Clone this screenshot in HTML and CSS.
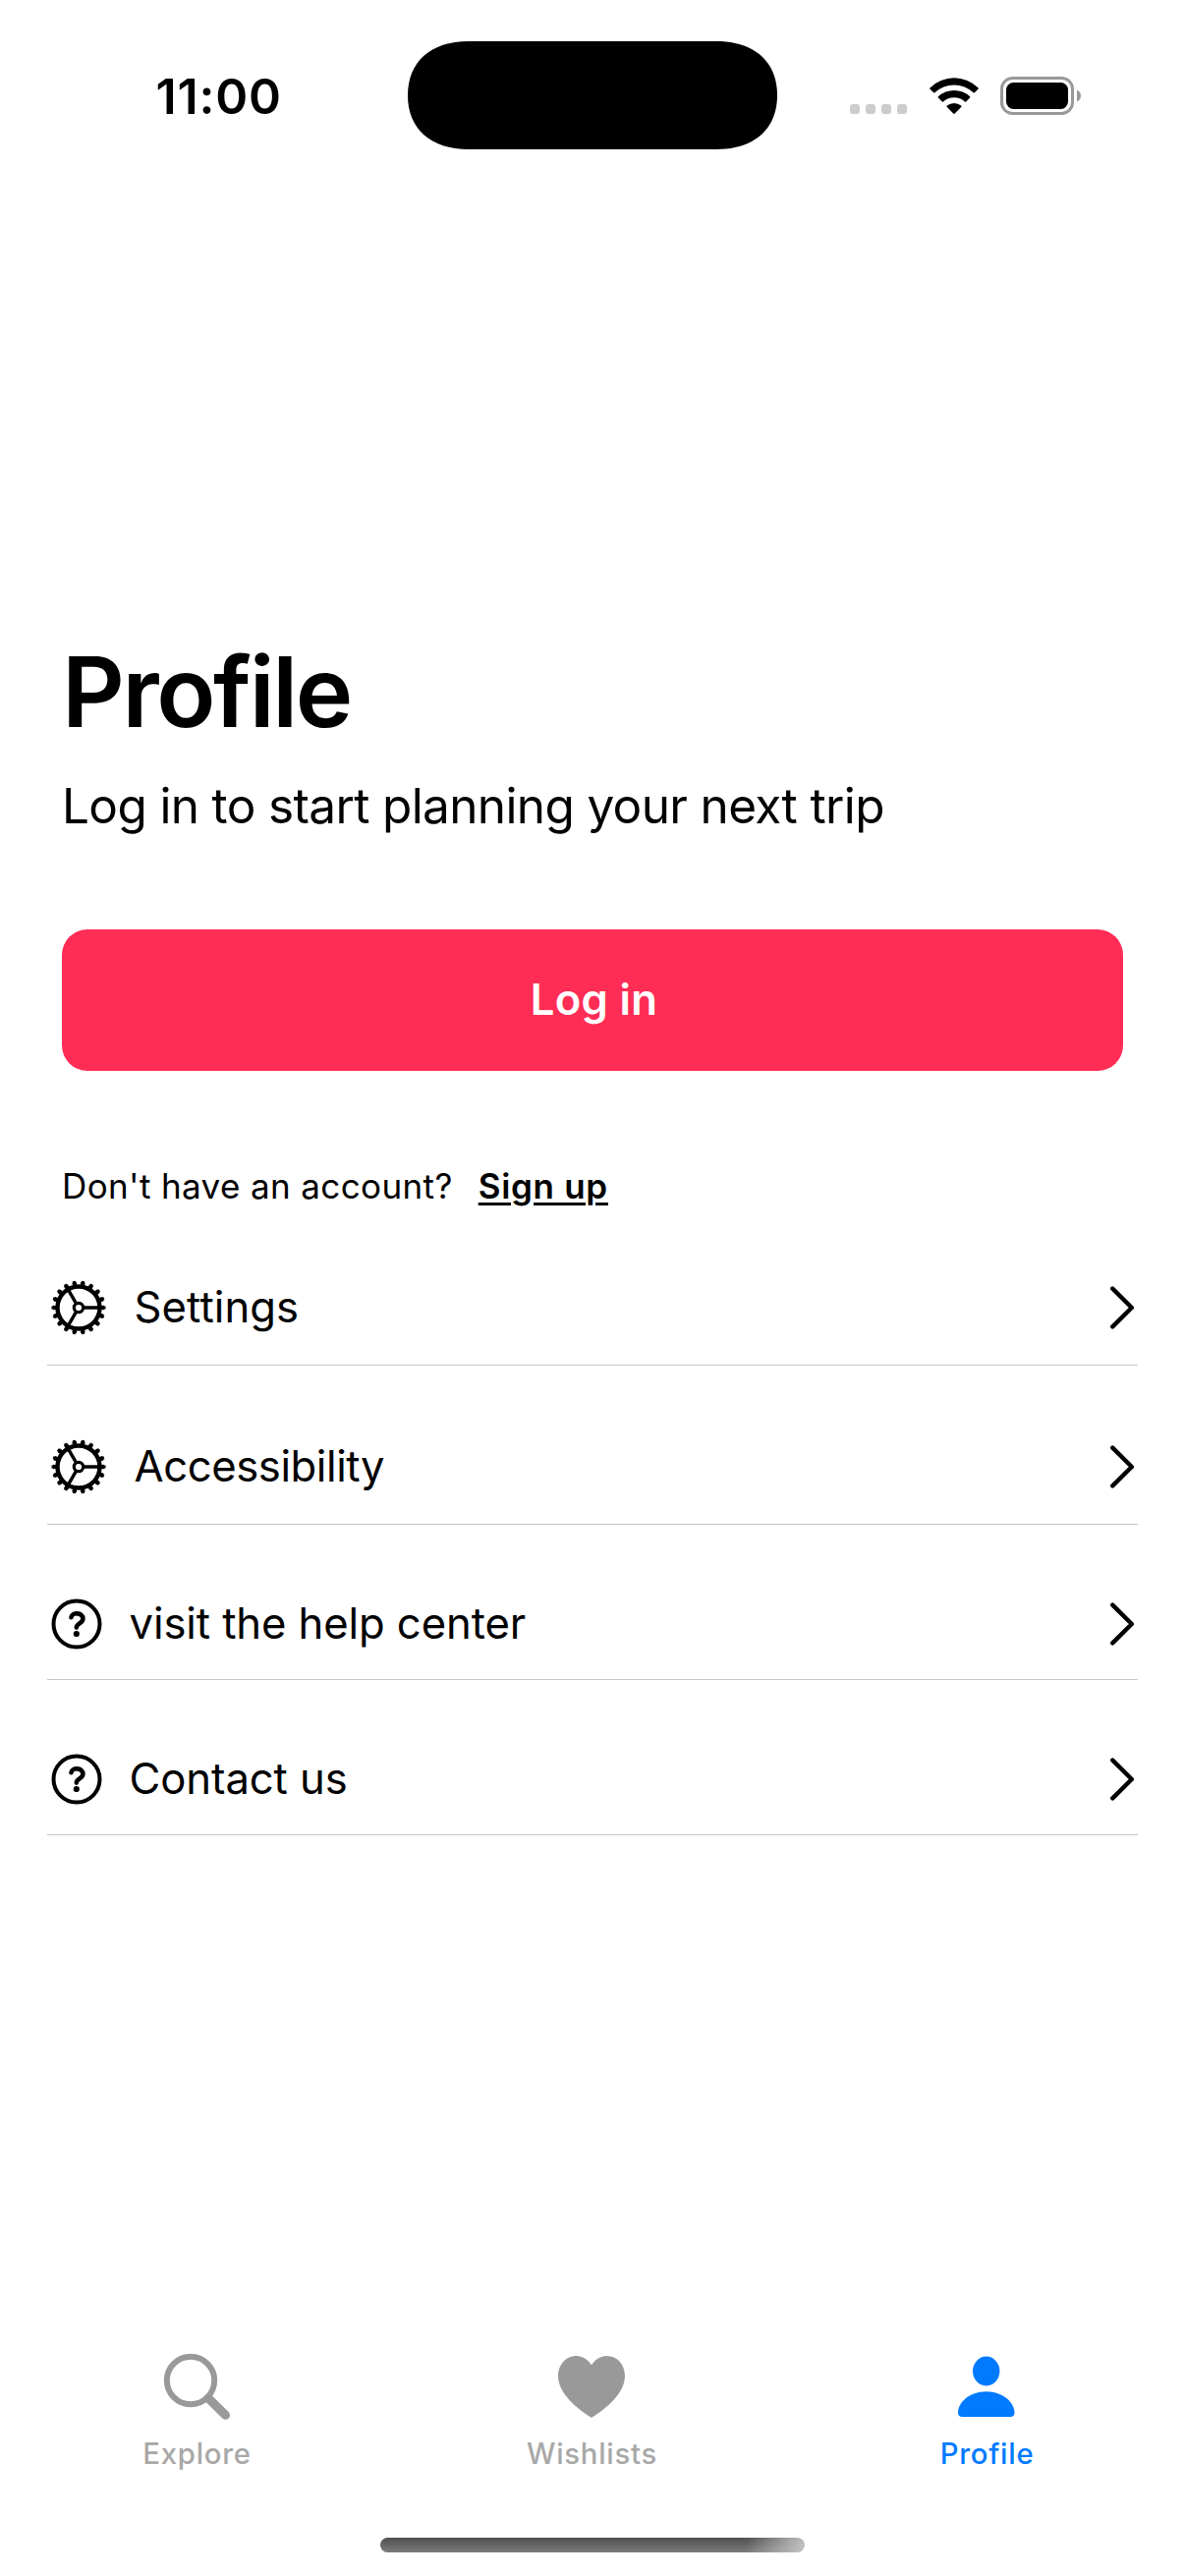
FILE: index.html
```html
<!DOCTYPE html>
<html lang="en">
<head>
<meta charset="utf-8">
<title>Profile</title>
<link rel="stylesheet" href="styles.css">
</head>
<body>
<svg class="defs" aria-hidden="true">
  <symbol id="gear" viewBox="-28 -28 56 56">
    <g fill="none" stroke="#000">
      <circle r="24.5" stroke-width="3.4" pathLength="18" stroke-dasharray=".52 .48" stroke-dashoffset=".26"/>
      <circle r="26" stroke-width="3" pathLength="18" stroke-dasharray=".34 .66" stroke-dashoffset=".17"/>
      <circle r="21.5" stroke-width="4.4"/>
      <circle r="4.7" stroke-width="3.2"/>
      <path d="M6 0H21M-3 -5.2L-10.5 -18.2M-3 5.2L-10.5 18.2" stroke-width="3.4"/>
    </g>
  </symbol>
  <symbol id="help" viewBox="-26 -26 52 52">
    <g fill="none" stroke="#000" stroke-width="4" stroke-linecap="round">
      <circle r="23.5"/>
      <path stroke-width="4.6" d="M-5.6 -6.8C-5 -12.2 6.4 -12.2 6.4 -5.2C6.4 -.6 -.2 -.6 -.2 3.6"/>
    </g>
    <circle cx="-.2" cy="10" r="3.1"/>
  </symbol>
  <symbol id="chevron" viewBox="0 0 24 44">
    <path d="M2.3 2.6L21.8 22L2.3 41.4" fill="none" stroke="#000" stroke-width="4.4" stroke-linecap="round" stroke-linejoin="round"/>
  </symbol>
</svg>
<div class="screen">
  <header class="status">
    <time class="clock">11:00</time>
    <svg class="island" viewBox="0 0 376 110"><path d="M62 0H314C353 0 376 21 376 55S353 110 314 110H62C23 110 0 89 0 55S23 0 62 0Z"/></svg>
    <div class="indicators">
      <div class="cell"><i></i><i></i><i></i><i></i></div>
      <svg class="wifi" viewBox="-25 0 50 38">
        <path d="M-24.6 10.4Q-25.2 11 -24.6 11.6L-20.8 15.3Q-20.2 15.8 -19.6 15.3A28.5 28.5 0 0 1 19.6 15.3Q20.2 15.8 20.8 15.3L24.6 11.6Q25.2 11 24.6 10.4A35 35 0 0 0 -24.6 10.4Z"/>
        <path d="M-16.1 19.3Q-16.7 19.9 -16.1 20.5L-12.1 24.4Q-11.5 25 -10.9 24.4A16.5 16.5 0 0 1 10.9 24.4Q11.5 25 12.1 24.4L16.1 20.5Q16.7 19.9 16.1 19.3A23.4 23.4 0 0 0 -16.1 19.3Z"/>
        <path d="M-7.2 28.6Q-7.9 29.2 -7.2 30L-.8 36.6Q0 37.4 .8 36.6L7.2 30Q7.9 29.2 7.2 28.6A11.5 11.5 0 0 0 -7.2 28.6Z"/>
      </svg>
      <svg class="battery" viewBox="0 0 82 39">
        <rect x="1.5" y="1.5" width="72" height="36" rx="11" fill="none" stroke="#999" stroke-width="3"/>
        <rect x="6" y="6" width="63" height="27" rx="7.5"/>
        <path d="M78 13.5Q82 15.5 82 19.5T78 25.5Z" fill="#999"/>
      </svg>
    </div>
  </header>

  <main class="content">
    <h1 class="title">Profile</h1>
    <p class="subtitle">Log in to start planning your next trip</p>
    <button class="login">Log in</button>
    <p class="signup"><span>Don't have an account?</span><a class="signup-link">Sign up</a></p>
    <ul class="menu">
      <li class="row"><svg class="gear"><use href="#gear"/></svg><span>Settings</span><svg class="chevron"><use href="#chevron"/></svg></li>
      <li class="row"><svg class="gear"><use href="#gear"/></svg><span class="tight">Accessibility</span><svg class="chevron"><use href="#chevron"/></svg></li>
      <li class="row short"><svg class="help"><use href="#help"/></svg><span>visit the help center</span><svg class="chevron"><use href="#chevron"/></svg></li>
      <li class="row short"><svg class="help"><use href="#help"/></svg><span>Contact us</span><svg class="chevron"><use href="#chevron"/></svg></li>
    </ul>
  </main>

  <nav class="tabs">
    <a class="tab">
      <svg viewBox="0 0 80 80"><g fill="none" stroke="#999"><circle cx="33" cy="33" r="24.2" stroke-width="6"/><path d="M51 51L68.5 68.3" stroke-width="9" stroke-linecap="round"/></g></svg>
      <span>Explore</span>
    </a>
    <a class="tab">
      <svg viewBox="0 0 80 80"><path fill="#999" d="M38 70.3C36 69 5 50.5 5 28.5C5 16.5 13.5 8 23.5 8C30 8 35 11.5 39 17.2C43 11.5 48 8 54.5 8C65 8 73 16.5 73 28.5C73 50.5 42 69 40 70.3Q39 71 38 70.3Z"/></svg>
      <span>Wishlists</span>
    </a>
    <a class="tab active">
      <svg viewBox="0 0 80 80"><g fill="#007aff"><ellipse cx="38.7" cy="23.5" rx="13.7" ry="15"/><path d="M14.5 70Q10 70 10 65.5C10 56 21 44.3 38.7 44.3S67.5 56 67.5 65.5Q67.5 70 63 70Z"/></g></svg>
      <span>Profile</span>
    </a>
  </nav>
  <div class="home-indicator"></div>
</div>
</body>
</html>
```
FILE: styles.css
```css
* { box-sizing: border-box; margin: 0; padding: 0; }
body {
  background: #fff;
  color: #000;
  font-family: Inter, "Liberation Sans", sans-serif;
}
.defs { display: none; }
svg { display: block; flex: none; }
.screen { width: 1206px; height: 2622px; display: flex; flex-direction: column; overflow: hidden; }

.status {
  height: 196px;
  display: grid;
  grid-template-columns: 415px 376px 1fr;
}
.clock { padding-left: 158.5px; font-size: 50px; font-weight: 600; line-height: 196px; letter-spacing: 0.8px; }
.island { width: 376px; height: 110px; margin-top: 42px; }
.indicators { display: flex; align-items: flex-end; height: 117px; padding-left: 74px; }
.cell { display: flex; gap: 6px; padding-bottom: 1px; margin-right: 22.5px; }
.cell i { width: 10px; height: 10px; border-radius: 3px; background: #ccc; }
.wifi { width: 50px; height: 38px; margin-right: 22.5px; }
.battery { width: 82px; height: 39px; }

.content { flex: 1; padding: 448px 63px 0; }
.title { font-size: 99px; font-weight: 600; line-height: 120px; letter-spacing: -2.4px; }
.subtitle { font-size: 49.5px; line-height: 112px; letter-spacing: -0.64px; }
.login {
  display: block;
  width: 100%;
  height: 144px;
  margin-top: 70px;
  padding-left: 3px;
  border: 0;
  border-radius: 26px;
  background: #ff2d55;
  color: #fff;
  font: 600 43.6px/144px Inter, "Liberation Sans", sans-serif;
  letter-spacing: 0.3px;
}
.signup { display: flex; gap: 26px; margin-top: 97px; font-size: 35px; line-height: 41px; letter-spacing: 0.38px; }
.signup-link {
  font-weight: 600;
  letter-spacing: 0.7px;
  text-decoration: underline;
  text-decoration-thickness: 3px;
  text-underline-offset: 4px;
}

.menu { list-style: none; margin: 0 -15px; }
.row {
  display: flex;
  align-items: center;
  height: 162px;
  padding: 44px 4px 0 3.5px;
  border-bottom: 1px solid #c6c6c6;
  font-size: 43.6px;
  letter-spacing: 0.1px;
}
.row.short { height: 158px; letter-spacing: -0.08px; }
.row .tight { letter-spacing: -0.4px; }
.gear { width: 56px; height: 56px; margin-right: 29px; }
.help { width: 52px; height: 52px; margin-right: 28px; }
.chevron { width: 24px; height: 44px; margin-left: auto; }

.tabs { display: grid; grid-template-columns: repeat(3, 1fr); height: 193px; flex: none; }
.tab {
  display: flex;
  flex-direction: column;
  align-items: center;
  gap: 10px;
  color: #a8a8a8;
  font-size: 29.3px;
  font-weight: 500;
  line-height: 35px;
  letter-spacing: 0.75px;
}
.tab svg { width: 80px; height: 80px; }
.tab span { padding-right: 1px; }
.active { color: #007aff; }
.home-indicator {
  width: 432px;
  height: 15px;
  margin: 0 387px 24px;
  border-radius: 8px;
  background:
    linear-gradient(100deg, rgba(200, 200, 200, 0) 86%, #c4c4c4 100%),
    linear-gradient(#505050, #7c7c7c);
}
```
